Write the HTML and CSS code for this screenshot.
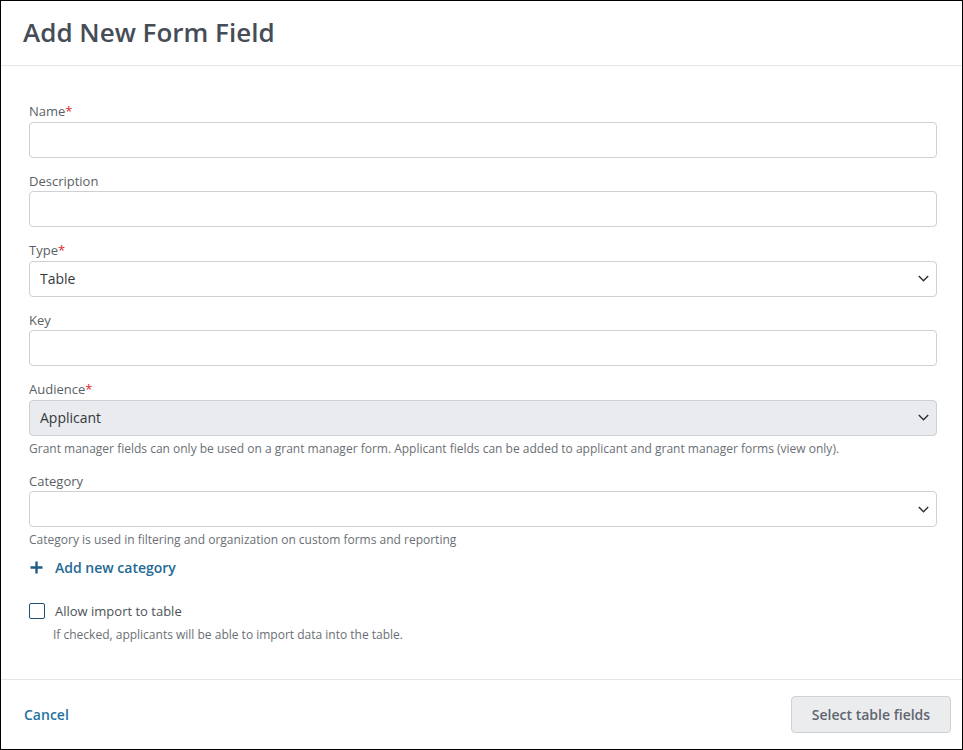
FILE: index.html
```html
<!DOCTYPE html>
<html>
<head>
<meta charset="utf-8">
<link rel="stylesheet" href="styles.css">
</head>
<body>
<div class="modal">
  <header class="modal-header">
    <h1 class="title">Add New Form Field</h1>
  </header>
  <main class="modal-body">
    <div class="field">
      <label class="label">Name<span class="req">*</span></label>
      <div class="input"></div>
    </div>
    <div class="field">
      <label class="label">Description</label>
      <div class="input"></div>
    </div>
    <div class="field">
      <label class="label">Type<span class="req">*</span></label>
      <div class="input select"><span>Table</span><svg class="chev" width="11" height="7" viewBox="0 0 11 7"><path d="M0.8 1 L5.5 5.7 L10.2 1" fill="none" stroke="#2b2f33" stroke-width="1.4"/></svg></div>
    </div>
    <div class="field">
      <label class="label">Key</label>
      <div class="input"></div>
    </div>
    <div class="field">
      <label class="label">Audience<span class="req">*</span></label>
      <div class="input select disabled"><span>Applicant</span><svg class="chev" width="11" height="7" viewBox="0 0 11 7"><path d="M0.8 1 L5.5 5.7 L10.2 1" fill="none" stroke="#2b2f33" stroke-width="1.4"/></svg></div>
      <p class="help">Grant manager fields can only be used on a grant manager form. Applicant fields can be added to applicant and grant manager forms (view only).</p>
    </div>
    <div class="field field-last">
      <label class="label">Category</label>
      <div class="input select"><span></span><svg class="chev" width="11" height="7" viewBox="0 0 11 7"><path d="M0.8 1 L5.5 5.7 L10.2 1" fill="none" stroke="#2b2f33" stroke-width="1.4"/></svg></div>
      <p class="help">Category is used in filtering and organization on custom forms and reporting</p>
    </div>
    <a class="add-link"><svg width="13" height="13" viewBox="0 0 13 13"><path d="M6.5 0.5 V12.5 M0.5 6.5 H12.5" stroke="#1f5f86" stroke-width="2.4"/></svg><span>Add new category</span></a>
    <div class="check-row">
      <span class="checkbox"></span>
      <span class="check-label">Allow import to table</span>
    </div>
    <p class="check-help">If checked, applicants will be able to import data into the table.</p>
  </main>
  <footer class="modal-footer">
    <a class="cancel">Cancel</a>
    <button class="btn">Select table fields</button>
  </footer>
</div>
</body>
</html>
```
FILE: styles.css
```css
* { box-sizing: border-box; }
html, body { margin: 0; padding: 0; }
body {
  font-family: "Open Sans", "Noto Sans", sans-serif;
  background: #fff;
}
.modal {
  width: 963px;
  height: 750px;
  border: 1px solid #000;
  display: flex;
  flex-direction: column;
  background: #fff;
}
.modal-header {
  height: 65px;
  border-bottom: 1px solid #e6e6e6;
  display: flex;
  align-items: center;
  padding-left: 22px;
  flex-shrink: 0;
}
.title {
  margin: 0;
  font-size: 26px;
  font-weight: 600;
  color: #464d56;
  position: relative;
  top: -1px;
}
.modal-body {
  flex: 1;
  padding: 36px 25px 0 28px;
  display: flex;
  flex-direction: column;
}
.field {
  display: flex;
  flex-direction: column;
  margin-bottom: 14px;
}
.field-last { margin-bottom: 8px; }
.label {
  font-size: 13px;
  line-height: 19.5px;
  color: #5a5f66;
}
.req { color: #e0261f; }
.input {
  height: 36px;
  border: 1px solid #cdd0d4;
  border-radius: 4px;
  background: #fff;
  flex-shrink: 0;
}
.select {
  display: flex;
  align-items: center;
  justify-content: space-between;
  padding: 0 7px 0 10px;
  font-size: 14px;
  color: #33383d;
}
.disabled { background: #e9ebee; }
.chev { flex-shrink: 0; }
.help {
  margin: 4px 0 0 0;
  font-size: 12px;
  line-height: 18px;
  color: #6a6f75;
}
.add-link {
  display: flex;
  align-items: center;
  gap: 12px;
  padding-left: 1px;
  font-size: 14px;
  font-weight: 600;
  color: #236a94;
  height: 20px;
}
.check-row {
  display: flex;
  align-items: center;
  gap: 10px;
  margin-top: 25px;
  height: 18px;
}
.checkbox {
  width: 16px;
  height: 16px;
  border: 1.5px solid #1f4f72;
  border-radius: 2px;
}
.check-label {
  font-size: 13px;
  color: #4d5257;
}
.check-help {
  margin: 6px 0 0 24px;
  font-size: 12px;
  line-height: 18px;
  color: #6a6f75;
}
.modal-footer {
  height: 70px;
  border-top: 1px solid #e6e6e6;
  display: flex;
  align-items: center;
  justify-content: space-between;
  padding: 0 11px 0 23px;
  flex-shrink: 0;
}
.cancel {
  font-size: 14px;
  font-weight: 600;
  color: #2772a0;
}
.btn {
  width: 160px;
  height: 37px;
  border: 1px solid #cfd1d4;
  border-radius: 4px;
  background: #ebecee;
  font-family: "Open Sans", "Noto Sans", sans-serif;
  font-size: 14px;
  font-weight: 600;
  color: #5f666e;
}
```
